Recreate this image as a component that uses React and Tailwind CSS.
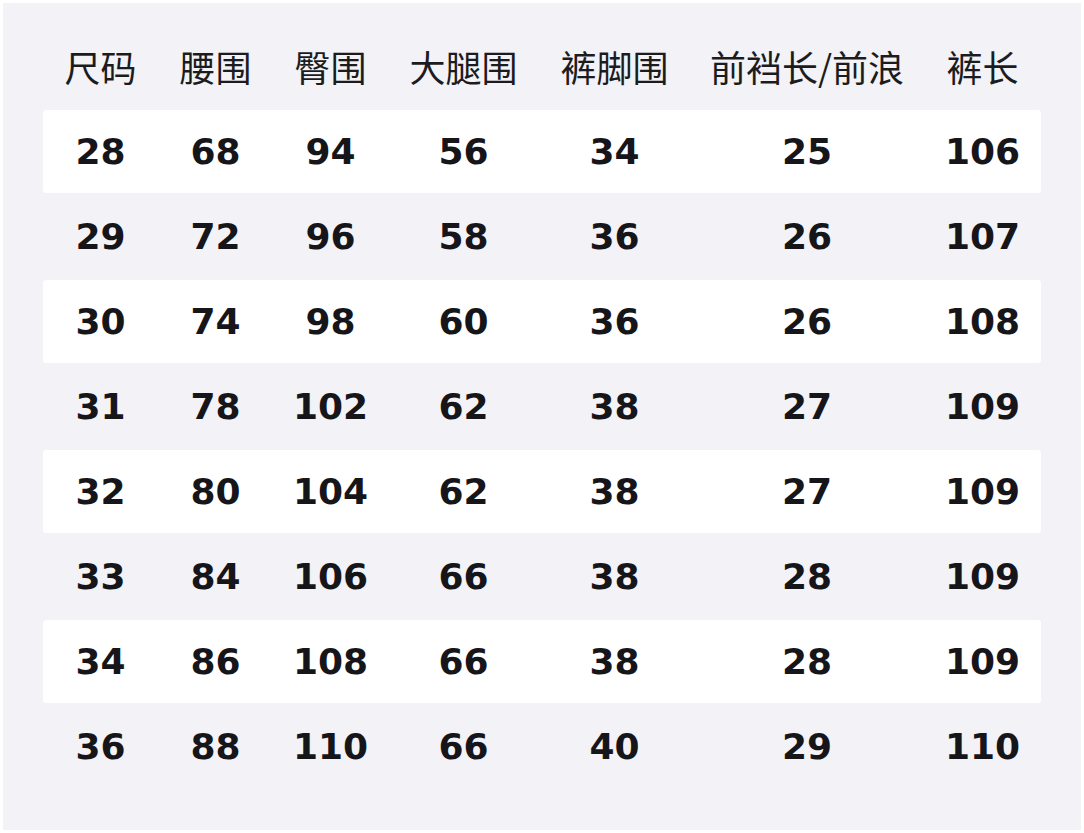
const headers = ['尺码', '腰围', '臀围', '大腿围', '裤脚围', '前裆长/前浪', '裤长']

const rows = [
    ['28', '68', '94', '56', '34', '25', '106'],
    ['29', '72', '96', '58', '36', '26', '107'],
    ['30', '74', '98', '60', '36', '26', '108'],
    ['31', '78', '102', '62', '38', '27', '109'],
    ['32', '80', '104', '62', '38', '27', '109'],
    ['33', '84', '106', '66', '38', '28', '109'],
    ['34', '86', '108', '66', '38', '28', '109'],
    ['36', '88', '110', '66', '40', '29', '110'],
]

const cols = 'grid grid-cols-[115px_115px_115px_151px_151px_234px_117px]'

export default function App() {
    return (
        <div className="w-[1084px] h-[833px] bg-white p-[3px]">
            <div className="w-full h-full bg-[#f2f2f7] pt-[20px] px-[40px]">
                <div className={`${cols} h-[85px] mb-[2px] items-center text-[36px] text-[#1c1c1e] font-['Noto_Sans_CJK_SC',sans-serif]`}>
                    {headers.map((h) => (
                        <div key={h} className="text-center leading-none">{h}</div>
                    ))}
                </div>
                {rows.map((row, i) => (
                    <div
                        key={i}
                        className={`${cols} h-[83px] mb-[2px] items-center rounded-[3px] ${i % 2 === 0 ? 'bg-white' : ''}`}
                    >
                        {row.map((v, j) => (
                            <div
                                key={j}
                                className="text-center text-[36px] font-bold leading-none text-[#16161a] font-['DejaVu_Sans',sans-serif]"
                            >
                                {v}
                            </div>
                        ))}
                    </div>
                ))}
            </div>
        </div>
    )
}
